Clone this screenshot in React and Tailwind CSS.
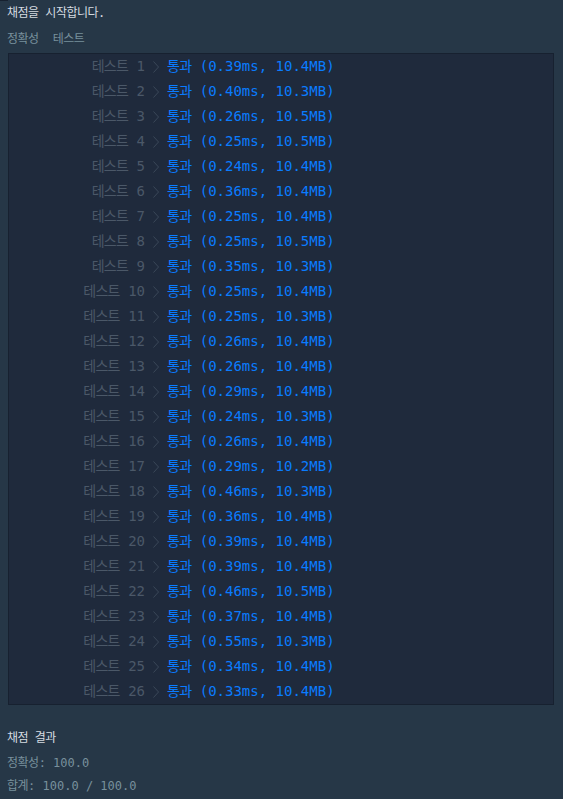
const results = [
  ["0.39", "10.4"],
  ["0.40", "10.3"],
  ["0.26", "10.5"],
  ["0.25", "10.5"],
  ["0.24", "10.4"],
  ["0.36", "10.4"],
  ["0.25", "10.4"],
  ["0.25", "10.5"],
  ["0.35", "10.3"],
  ["0.25", "10.4"],
  ["0.25", "10.3"],
  ["0.26", "10.4"],
  ["0.26", "10.4"],
  ["0.29", "10.4"],
  ["0.24", "10.3"],
  ["0.26", "10.4"],
  ["0.29", "10.2"],
  ["0.46", "10.3"],
  ["0.36", "10.4"],
  ["0.39", "10.4"],
  ["0.39", "10.4"],
  ["0.46", "10.5"],
  ["0.37", "10.4"],
  ["0.55", "10.3"],
  ["0.34", "10.4"],
  ["0.33", "10.4"],
];

// Hangul glyphs in the original are a bit narrower than Noto's full-width cells
function Ko({ children, big }) {
  return <span className={big ? "tracking-[-0.75px]" : "tracking-[-0.5px]"}>{children}</span>;
}

function Row({ n, time, mem }) {
  return (
    <div className="flex h-[25px] items-center text-[14px]">
      <div className="w-[136px] text-right text-[#4b5868]">
        <Ko big>테스트</Ko> {n}
      </div>
      <div className="flex w-[22px] justify-center">
        <svg width="6" height="12" viewBox="0 0 6 12" fill="none">
          <path d="M0.5 0.5 L5.5 6 L0.5 11.5" stroke="#3b4858" strokeWidth="1" />
        </svg>
      </div>
      <div className="text-[#0a7cff]">
        <Ko big>통과</Ko> ({time}ms, {mem}MB)
      </div>
    </div>
  );
}

export default function App() {
  return (
    <div className="min-h-[799px] w-[563px] bg-[#263747] text-[12px] whitespace-pre font-['DejaVu_Sans_Mono','Noto_Sans_CJK_KR',monospace]">
      <div className="h-px w-2 bg-[#172130]" />
      <div className="h-[24px] pl-[7px] leading-[24px] text-[#d5dbe1]">
        <Ko>채점을 시작합니다</Ko>.
      </div>
      <div className="flex h-[28px] gap-[14px] pl-[7px] leading-[28px] text-[#78909c]">
        <Ko>정확성</Ko>
        <Ko>테스트</Ko>
      </div>
      <div className="ml-2 w-[546px] border border-[#172130] bg-[#1f2a3c]">
        {results.map(([t, m], i) => (
          <Row key={i} n={i + 1} time={t} mem={m} />
        ))}
      </div>
      <div className="mt-[21px] h-[24px] pl-[7px] leading-[24px] text-[#d5dbe1]">
        <Ko>채점 결과</Ko>
      </div>
      <div className="mt-px h-[24px] pl-[7px] leading-[24px] text-[#78909c]">
        <Ko>정확성</Ko>: 100.0
      </div>
      <div className="h-[22px] pl-[7px] leading-[22px] text-[#78909c]">
        <Ko>합계</Ko>: 100.0 / 100.0
      </div>
    </div>
  );
}
